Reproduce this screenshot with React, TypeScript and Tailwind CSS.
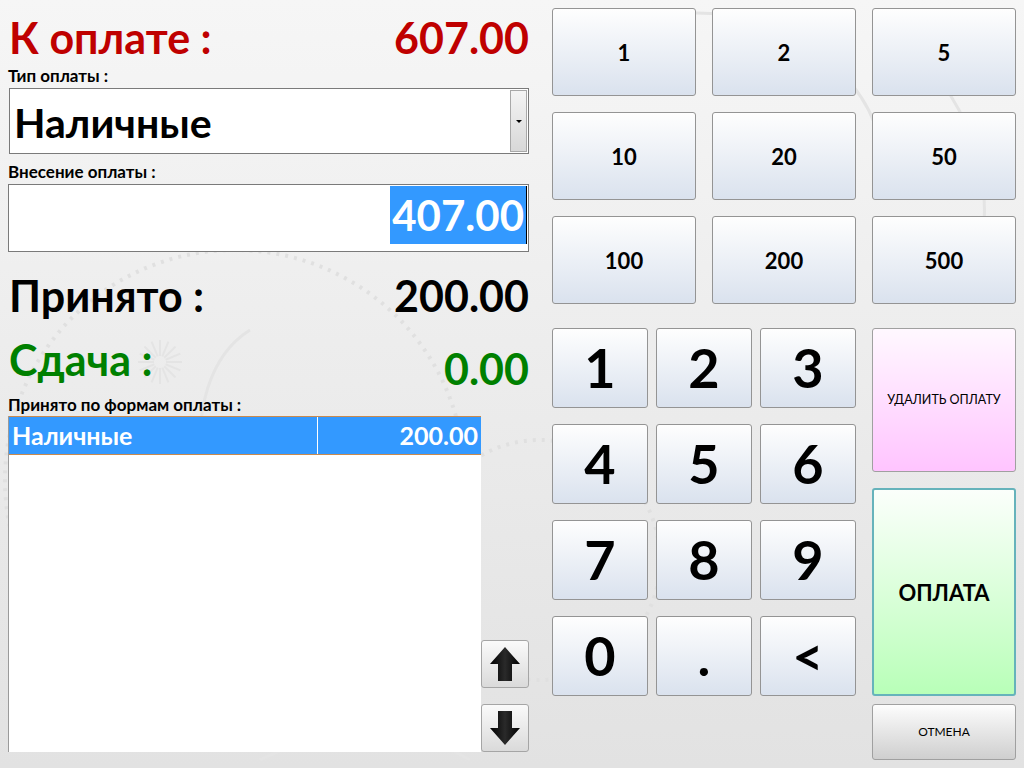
import React from 'react';

const quick = ['1', '2', '5', '10', '20', '50', '100', '200', '500'];
const keys = ['1', '2', '3', '4', '5', '6', '7', '8', '9', '0', '.', '<'];

const btn =
  'flex items-center justify-center rounded-[3px] border border-[#949494] bg-gradient-to-b from-[#fefefe] to-[#dae2ee] text-black font-bold';

const ArrowIcon = ({ down }: { down?: boolean }) => (
  <svg width="32" height="36" viewBox="0 0 32 36" className={down ? 'rotate-180' : ''}>
    <defs>
      <linearGradient id={down ? 'ad' : 'au'} x1="0" x2="1" y1="0" y2="0">
        <stop offset="0" stopColor="#000" />
        <stop offset="0.5" stopColor="#2a2a2a" />
        <stop offset="1" stopColor="#000" />
      </linearGradient>
    </defs>
    <polygon points="16,1 31,18 23,18 23,35 9,35 9,18 1,18" fill={`url(#${down ? 'ad' : 'au'})`} />
  </svg>
);

// faint ornament printed on the window background
const Ornament = () => (
  <svg className="absolute inset-0 pointer-events-none" width="1024" height="768" viewBox="0 0 1024 768">
    <g fill="none" stroke="#e0e0e0" strokeWidth="4" strokeDasharray="3 6">
      <circle cx="235" cy="480" r="230" />
      <circle cx="540" cy="560" r="120" />
    </g>
    <g fill="none" stroke="#e4e4e4" strokeWidth="3">
      <path d="M250 330 C 170 380 180 560 330 640 C 420 690 480 620 470 520" />
      <path d="M640 20 C 760 -10 860 60 880 140" />
      <path d="M900 40 C 980 100 1010 220 960 300" />
      <path d="M260 760 C 340 720 420 730 470 760" />
    </g>
    <g stroke="#e4e4e4" strokeWidth="2">
      {Array.from({ length: 16 }).map((_, i) => {
        const a = (i / 16) * Math.PI * 2;
        return (
          <line
            key={i}
            x1={160 + Math.cos(a) * 6}
            y1={362 + Math.sin(a) * 6}
            x2={160 + Math.cos(a) * 22}
            y2={362 + Math.sin(a) * 22}
          />
        );
      })}
    </g>
  </svg>
);

const App = () => {
  return (
    <div className="relative w-[1024px] h-[768px] overflow-hidden bg-gradient-to-b from-[#f6f6f6] to-[#e2e2e2] font-['Lato',sans-serif] text-black">
      <Ornament />
      <div className="relative flex h-full">
        {/* left panel */}
        <div className="w-[529px] pl-[8px] flex flex-col">
          <div className="flex justify-between items-end h-[60px] pl-[1px] text-[#bf0000] font-bold text-[43px] leading-none pb-[1px]">
            <span>К оплате :</span>
            <span>607.00</span>
          </div>
          <div className="h-[28px] flex items-center text-[17px] font-bold leading-none pt-[3px]">Тип оплаты :</div>
          <div className="ml-[1px] h-[66px] border border-[#7a7a7a] bg-white flex">
            <div className="flex-1 flex items-center pl-[4px] text-[41px] font-bold leading-none pt-[3px]">Наличные</div>
            <div className="w-[17px] my-[1px] mr-[1px] border border-[#a8a8a8] bg-gradient-to-b from-[#f4f4f4] to-[#d8d8d8] flex items-center justify-center">
              <div className="w-0 h-0 border-l-[3px] border-r-[3px] border-t-[3px] border-l-transparent border-r-transparent border-t-black" />
            </div>
          </div>
          <div className="h-[30px] flex items-center text-[17px] font-bold leading-none pt-[4px]">Внесение оплаты :</div>
          <div className="h-[68px] border border-[#7a7a7a] bg-white flex justify-end items-start p-[1px]">
            <span className="bg-[#3399ff] text-white font-bold text-[42px] leading-[58px] h-[58px] px-[2px]">407.00</span>
            <span className="w-[1px] h-[58px] bg-black" />
          </div>
          <div className="flex justify-between items-end h-[65px] pl-[1px] font-bold text-[43px] leading-none">
            <span>Принято :</span>
            <span>200.00</span>
          </div>
          <div className="flex justify-between items-end h-[73px] pl-[1px] font-bold text-[43px] leading-none text-[#008000]">
            <span className="mb-[9px]">Сдача :</span>
            <span>0.00</span>
          </div>
          <div className="h-[26px] flex items-center text-[17px] font-bold leading-none pt-[2px]">Принято по формам оплаты :</div>
          <div className="flex h-[336px]">
            <div className="w-[473px] bg-white border-l border-[#9a9a9a]">
              <div className="flex h-[39px] bg-[#3399ff] border-y border-[#c98a4e] text-white font-bold text-[25px] leading-none">
                <div className="w-[309px] border-r border-white flex items-center pl-[3px]">Наличные</div>
                <div className="flex-1 flex items-center justify-end pr-[3px]">200.00</div>
              </div>
            </div>
            <div className="flex flex-col justify-end gap-[16px]">
              <button className="w-[48px] h-[48px] rounded-[3px] border border-[#a5a5a5] bg-gradient-to-b from-[#fafafa] to-[#dadada] flex items-center justify-center">
                <ArrowIcon />
              </button>
              <button className="w-[48px] h-[48px] rounded-[3px] border border-[#a5a5a5] bg-gradient-to-b from-[#fafafa] to-[#dadada] flex items-center justify-center">
                <ArrowIcon down />
              </button>
            </div>
          </div>
        </div>

        {/* right panel */}
        <div className="ml-[23px] pt-[8px] flex flex-col w-[464px]">
          <div className="grid grid-cols-3 gap-x-[16px] gap-y-[16px]">
            {quick.map((q) => (
              <button key={q} className={`${btn} h-[88px] text-[22px]`}>
                {q}
              </button>
            ))}
          </div>
          <div className="mt-[24px] flex items-start gap-[16px]">
            <div className="grid grid-cols-3 content-start gap-x-[8px] gap-y-[16px] w-[304px]">
              {keys.map((k) => (
                <button key={k} className={`${btn} h-[80px] text-[54px] leading-none`}>
                  {k}
                </button>
              ))}
            </div>
            <div className="w-[144px] flex flex-col">
              <button className="h-[144px] rounded-[3px] border border-[#a0a0a0] bg-gradient-to-b from-[#fff8ff] to-[#ffc4ff] text-[12.5px] text-black">
                УДАЛИТЬ ОПЛАТУ
              </button>
              <button className="mt-[16px] h-[208px] rounded-[3px] border-2 border-[#66b3bb] bg-gradient-to-b from-[#fbfffb] to-[#b8ffb8] text-[22px] font-bold">
                ОПЛАТА
              </button>
              <button className="mt-[8px] h-[56px] rounded-[3px] border border-[#a0a0a0] bg-gradient-to-b from-[#fdfdfd] to-[#cfcfcf] text-[12px]">
                ОТМЕНА
              </button>
            </div>
          </div>
        </div>
      </div>
    </div>
  );
};

export default App;
